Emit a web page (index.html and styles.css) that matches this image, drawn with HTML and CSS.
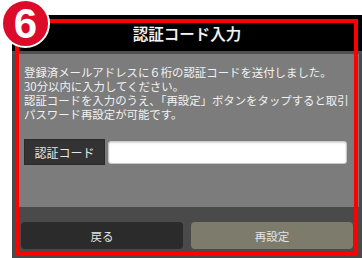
FILE: index.html
```html
<!DOCTYPE html>
<html lang="ja">
<head>
    <meta charset="UTF-8">
    <meta name="viewport" content="width=device-width, initial-scale=1.0">
    <title>認証コード入力</title>
    <link rel="stylesheet" href="styles.css">
</head>
<body>
    <div id="wrap">
        <div class="step-badge">6</div>
        <div class="highlight-frame"></div>

        <div id="screen">
            <header class="title-bar">
                <h1>認証コード入力</h1>
            </header>

            <div class="content">
                <p class="message">
                    <span class="line">登録済メールアドレスに６桁の認証コードを送付しました。</span>
                    <span class="line">30分以内に入力してください。</span>
                    <span class="line">認証コードを入力のうえ、「再設定」ボタンをタップすると取引</span>
                    <span class="line">パスワード再設定が可能です。</span>
                </p>
                <div class="code-row">
                    <label for="code" class="code-label">認証コード</label>
                    <input type="text" id="code" class="code-input">
                </div>
            </div>

            <footer class="actions">
                <button type="button" class="btn btn-back">戻る</button>
                <button type="button" class="btn btn-reset">再設定</button>
            </footer>
        </div>
    </div>
</body>
</html>
```

FILE: styles.css
```css
body {
    font-family: "Noto Sans CJK JP", "Noto Sans", sans-serif;
    margin: 0;
    padding: 0;
    background-color: #fff;
    overflow: hidden;
}

#wrap {
    position: relative;
    height: 258px;
    box-sizing: border-box;
    padding: 15px 0 0 12px;
}

#screen {
    width: 350px;
    height: 243px;
    background-color: #4a4a4a;
    display: flex;
    flex-direction: column;
}

.title-bar {
    height: 36px;
    flex-shrink: 0;
    background-color: #000;
    border-bottom: 3px solid #505050;
    display: flex;
    align-items: center;
    justify-content: center;
}

.title-bar h1 {
    margin: 0;
    font-size: 15.5px;
    line-height: 20px;
    font-weight: 500;
    color: #f4f4f4;
    text-shadow: 0 0 1px rgba(255, 255, 255, 0.4);
}

.content {
    height: 153px;
    flex-shrink: 0;
    box-sizing: border-box;
    background-color: #7c7c7c;
    border-left: 3px solid #4a4a4a;
    border-right: 3px solid #4a4a4a;
    padding: 11px 12px 0 9px;
}

.message {
    margin: 0;
    font-size: 11.4px;
    color: #f2f2f2;
    white-space: nowrap;
}

.message .line {
    display: block;
    height: 14px;
    line-height: 14px;
}

.code-row {
    display: flex;
    align-items: center;
    gap: 3px;
    margin-top: 18px;
}

.code-label {
    width: 81px;
    height: 26px;
    box-sizing: border-box;
    background-color: #333;
    border: 1px solid #2a2a2a;
    color: #e6e6e6;
    font-size: 12px;
    display: flex;
    align-items: center;
    justify-content: center;
}

.code-input {
    flex: 1;
    height: 23px;
    box-sizing: border-box;
    border: 1px solid #c8c8c8;
    border-radius: 3px;
    background-color: #fff;
    box-shadow: inset 0 1px 2px rgba(0, 0, 0, 0.15);
    padding: 0 6px;
}

.actions {
    flex: 1;
    display: flex;
    gap: 8px;
    padding: 15px 9px 0;
}

.btn {
    flex: 1;
    height: 27px;
    border: none;
    border-radius: 4px;
    font-family: inherit;
    font-size: 11.5px;
    color: #e4e4e4;
    cursor: pointer;
}

.btn-back {
    background-color: #2b2b2b;
}

.btn-reset {
    background-color: #7d7b6b;
}

/* annotation overlays */
.highlight-frame {
    position: absolute;
    left: 15px;
    top: 19px;
    width: 343px;
    height: 237px;
    box-sizing: border-box;
    border: 4px solid #ff0000;
    z-index: 1;
}

.step-badge {
    position: absolute;
    left: 1px;
    top: -1px;
    width: 49px;
    height: 49px;
    box-sizing: border-box;
    border-radius: 50%;
    border: 2px solid #fff;
    background-color: #dc0b2a;
    color: #fff;
    font-family: "Liberation Sans", Arial, sans-serif;
    font-weight: bold;
    font-size: 42px;
    line-height: 45px;
    text-align: center;
    z-index: 2;
}
```
